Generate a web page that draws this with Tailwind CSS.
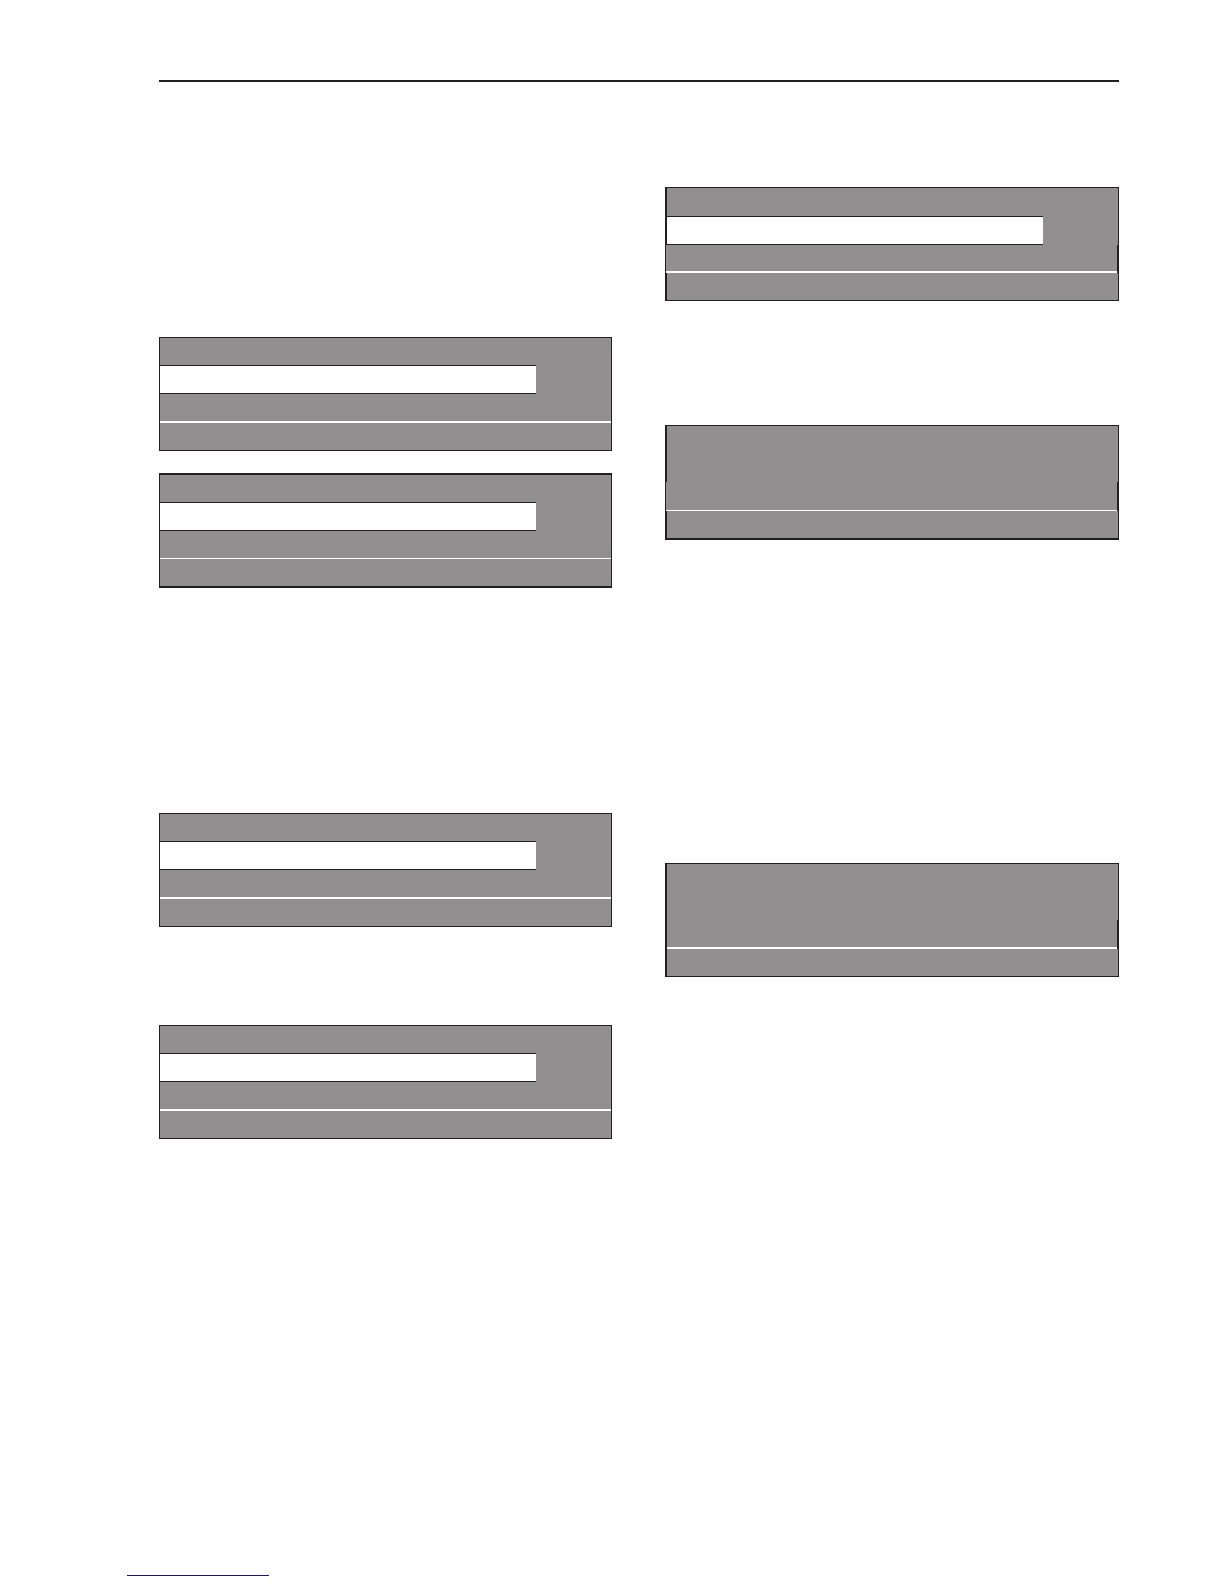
<!DOCTYPE html>
<html lang="en">
    <head>
        <meta charset="utf-8" />
        <title>Display panels</title>
        <meta name="viewport" content="width=device-width, initial-scale=1.0">
        <script src="https://cdn.jsdelivr.net/npm/@tailwindcss/browser@4"></script>
    </head>
    <body class="bg-white font-['Liberation_Sans',sans-serif]">
        <main class="pt-20 pl-[159px] pr-[105px]">
            <hr class="border-t-2 border-[#231f20]">
            <div class="grid grid-cols-[453fr_454fr] gap-x-[53px] items-start">
                <!-- left column -->
                <div class="pt-[255px]">
                    <section class="border border-[#231f20] bg-[#918f90]">
                        <div class="h-[27px]"></div>
                        <div class="h-[29px] w-[376px] max-w-full border-y border-[#231f20] bg-white"></div>
                        <div class="h-[27px]"></div>
                        <div class="h-[2px] bg-white"></div>
                        <div class="h-[27px]"></div>
                    </section>
                    <section class="mt-[22px] border-x border-y-2 border-[#231f20] bg-[#918f90]">
                        <div class="h-[27px]"></div>
                        <div class="h-[29px] w-[376px] max-w-full border-y border-[#231f20] bg-white"></div>
                        <div class="h-[27px]"></div>
                        <div class="h-px bg-white"></div>
                        <div class="h-[27px]"></div>
                    </section>
                    <section class="mt-[225px] border border-[#231f20] bg-[#918f90]">
                        <div class="h-[27px]"></div>
                        <div class="h-[29px] w-[376px] max-w-full border-y border-[#231f20] bg-white"></div>
                        <div class="h-[27px]"></div>
                        <div class="h-[2px] bg-white"></div>
                        <div class="h-[27px]"></div>
                    </section>
                    <section class="mt-[98px] border border-[#231f20] bg-[#918f90]">
                        <div class="h-[27px]"></div>
                        <div class="h-[29px] w-[376px] max-w-full border-y border-[#231f20] bg-white"></div>
                        <div class="h-[27px]"></div>
                        <div class="h-[2px] bg-white"></div>
                        <div class="h-[27px]"></div>
                    </section>
                </div>
                <!-- right column, side borders are set per row -->
                <div class="pt-[105px]">
                    <section class="border-y border-[#231f20] bg-[#918f90]">
                        <div class="border-l-2 border-r border-[#231f20] pt-[28px]">
                            <div class="h-[29px] w-[376px] max-w-full border-y border-[#231f20] bg-white"></div>
                        </div>
                        <div class="border-l border-r-2 border-[#231f20]">
                            <div class="h-[26px]"></div>
                            <div class="h-[2px] bg-white"></div>
                        </div>
                        <div class="h-[27px] border-l-2 border-r border-[#231f20]"></div>
                    </section>
                    <section class="mt-[124px] border-t border-b-2 border-[#231f20] bg-[#918f90]">
                        <div class="h-[56px] border-l-2 border-r border-[#231f20]"></div>
                        <div class="border-l border-r-2 border-[#231f20]">
                            <div class="h-[28px]"></div>
                            <div class="h-px bg-white"></div>
                        </div>
                        <div class="h-[27px] border-l-2 border-r border-[#231f20]"></div>
                    </section>
                    <section class="mt-[323px] border-y border-[#231f20] bg-[#918f90]">
                        <div class="h-[56px] border-l-2 border-r border-[#231f20]"></div>
                        <div class="border-x-2 border-[#231f20]">
                            <div class="h-[27px]"></div>
                            <div class="h-[2px] bg-white"></div>
                        </div>
                        <div class="h-[27px] border-l-2 border-r border-[#231f20]"></div>
                    </section>
                </div>
            </div>
        </main>
        <footer class="pt-[416px] pl-[127px] pb-2">
            <a href="#" aria-label="Link" class="block h-[21px] w-[142px] border-b border-[#12128c]"></a>
        </footer>
    </body>
</html>
